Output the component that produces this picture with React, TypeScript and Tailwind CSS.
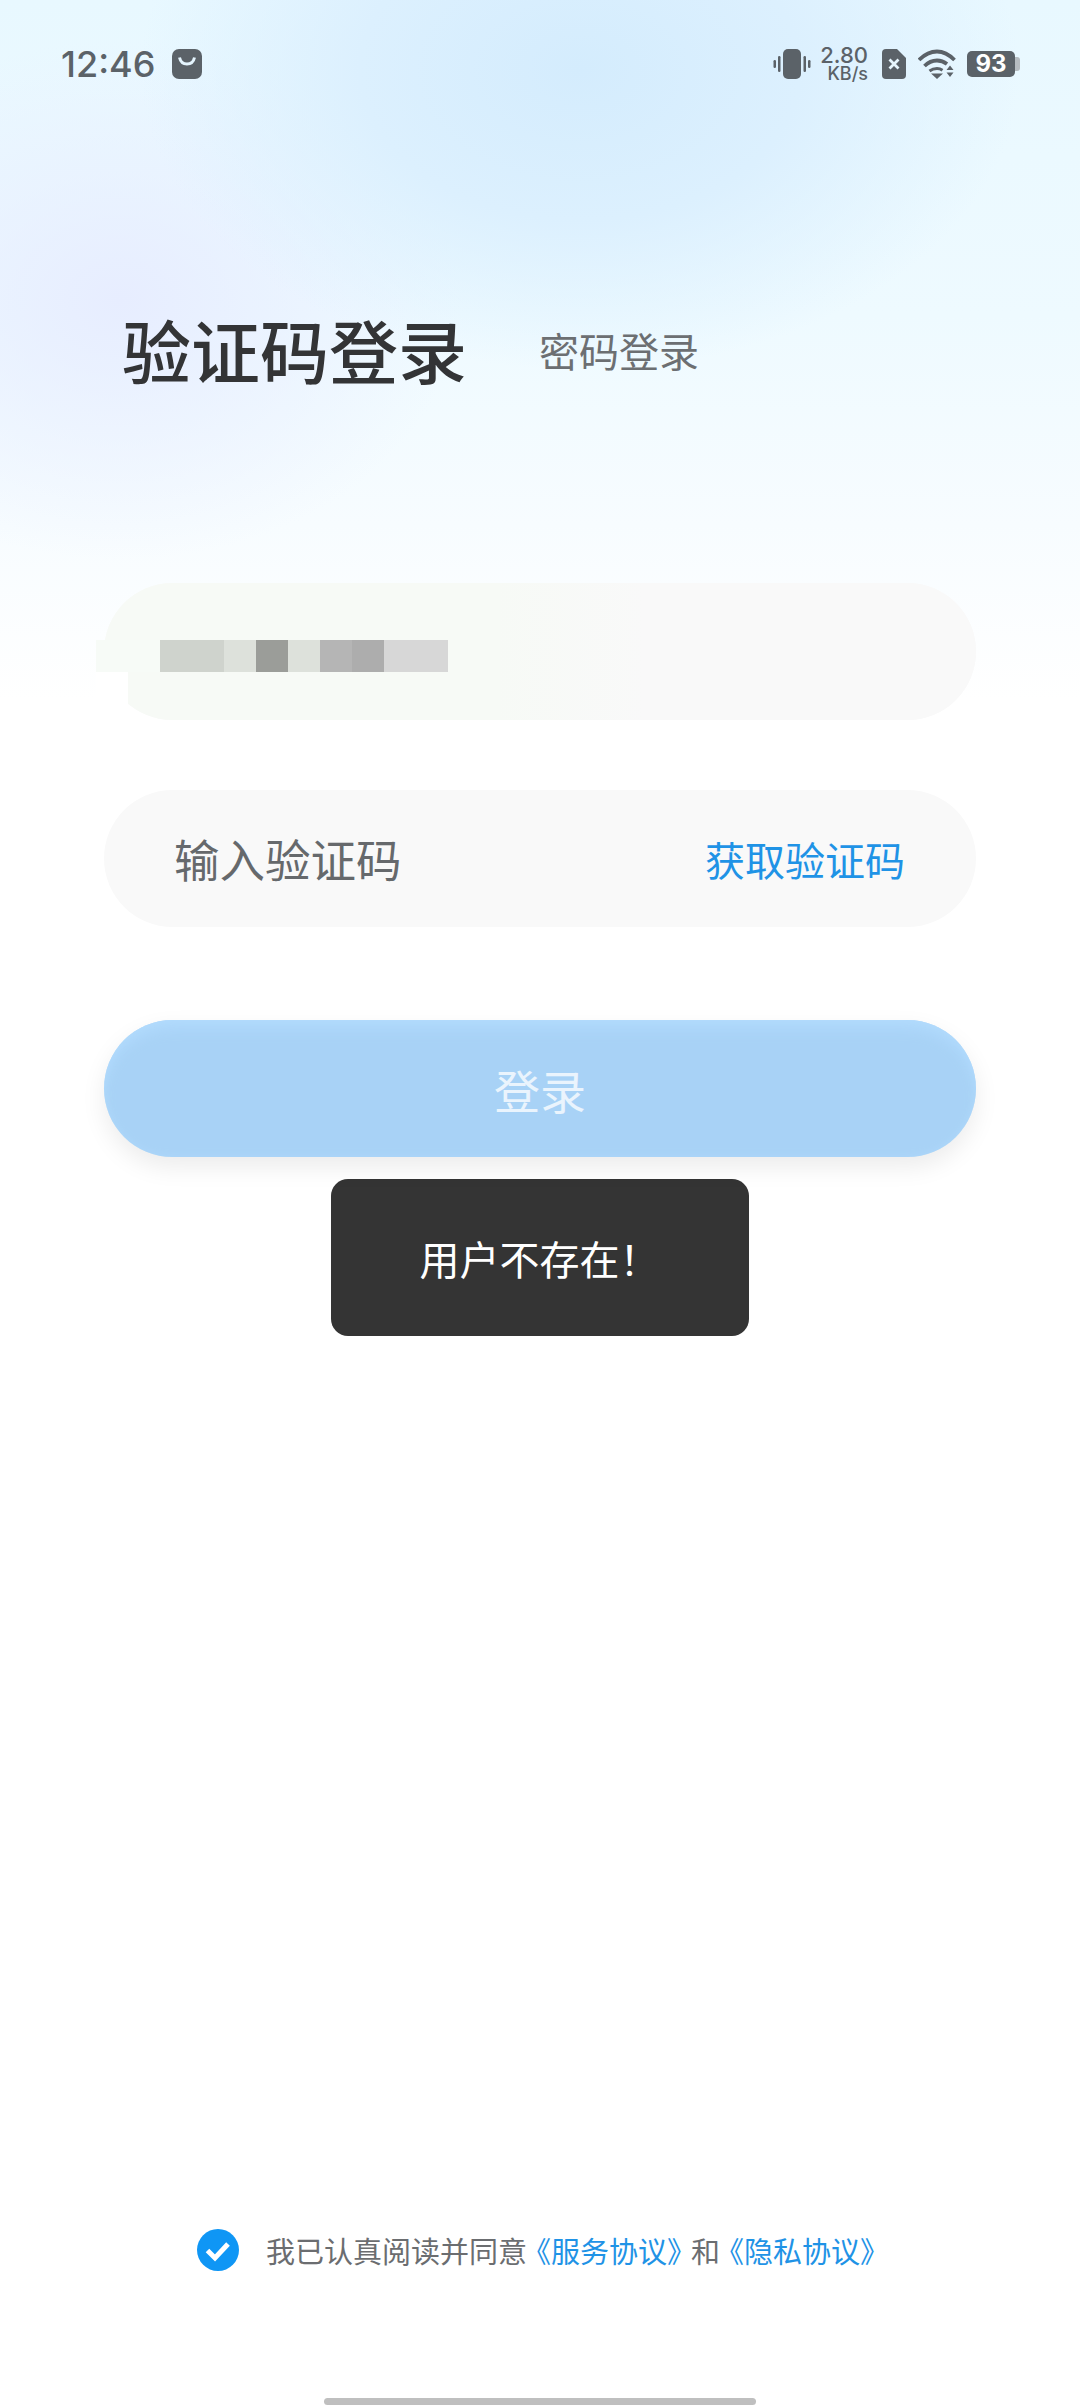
const cjk = "font-['Noto_Sans_CJK_SC','Noto_Sans',sans-serif]";

const blocks = [
  "w-[64px] bg-[#cfd3cd]",
  "w-[32px] bg-[#dde1db]",
  "w-[32px] bg-[#9b9d99]",
  "w-[32px] bg-[#dde1db]",
  "w-[32px] bg-[#b5b5b5]",
  "w-[32px] bg-[#adadad]",
  "w-[64px] bg-[#d7d7d7]",
];

function StatusBar() {
  return (
    <div className="flex h-[62px] items-center justify-between pl-[61px] pr-[60px] text-[#5b6268]">
      <div className="flex items-center gap-[17px]">
        <span className="font-['Inter',sans-serif] text-[36px] font-medium leading-none">12:46</span>
        <svg width="30" height="30" viewBox="0 0 30 30">
          <rect width="30" height="30" rx="7" fill="#5b6268" />
          <path d="M7.500 8.500c1 4.500 4 6.500 7.500 6.500s6.500-2 7.500-6.500" fill="none" stroke="#e4f4fd" strokeWidth="3" />
        </svg>
      </div>
      <div className="flex items-center">
        <svg width="38" height="30" viewBox="0 0 38 30" className="mr-[11px]">
          <rect x="10" y="0" width="18" height="30" rx="5" fill="#5b6268" />
          <rect x="5" y="7" width="2.500" height="16" rx="1.200" fill="#5b6268" />
          <rect x="0.500" y="11" width="2.500" height="8" rx="1.200" fill="#5b6268" />
          <rect x="30.500" y="7" width="2.500" height="16" rx="1.200" fill="#5b6268" />
          <rect x="35" y="11" width="2.500" height="8" rx="1.200" fill="#5b6268" />
        </svg>
        <div className="mr-[14px] flex w-[46px] flex-col items-end font-['Inter',sans-serif] font-medium">
          <span className="text-[22px] leading-[19px]">2.80</span>
          <span className="text-[18px] leading-[17px]">KB/s</span>
        </div>
        <svg width="24" height="30" viewBox="0 0 24 30" className="mr-[12px]">
          <path d="M4 0h11l9 9v17a4 4 0 0 1-4 4H4a4 4 0 0 1-4-4V4a4 4 0 0 1 4-4z" fill="#5b6268" />
          <path d="M7.500 10.500l9 9M16.500 10.500l-9 9" stroke="#e8f7fe" strokeWidth="2.800" />
        </svg>
        <svg width="38" height="30" viewBox="0 0 38 30" className="mr-[11px]">
          <path d="M1 11c5.500-5.500 12-8.500 18-8.500S31 5.500 36.500 11" fill="none" stroke="#5b6268" strokeWidth="3.800" />
          <path d="M6.500 17c3.500-3.500 8-5.500 12.500-5.500 3.500 0 7 1.200 10 3.500" fill="none" stroke="#5b6268" strokeWidth="3.800" />
          <path d="M13 24.500h12l-6 5.500z" fill="#5b6268" />
          <path d="M11.500 22c2-1.500 4.800-2.500 7.500-2.500s4 .7 5.500 1.700" fill="none" stroke="#5b6268" strokeWidth="3" />
          <path d="M28.500 21l3.500-4.500 3.500 4.500zM28.500 23.500h7l-3.500 4.500z" fill="#5b6268" />
        </svg>
        <div className="flex items-center">
          <div className="flex h-[26px] w-[48px] items-center justify-center rounded-[5px] bg-[#5b6268] font-['Inter',sans-serif] text-[24px] font-bold leading-none text-white">
            93
          </div>
          <div className="h-[14px] w-[5px] rounded-r-[3px] bg-[#b6bcc0]" />
        </div>
      </div>
    </div>
  );
}

export default function App() {
  return (
    <div className={`${cjk} relative h-[2408px] w-[1080px] overflow-hidden bg-white`}>
      <div className="absolute inset-x-0 top-0 h-[700px] bg-[radial-gradient(ellipse_440px_300px_at_580px_70px,#d4ecfd_0%,#dcf0fe_50%,rgba(232,247,255,0)_100%),radial-gradient(ellipse_340px_260px_at_120px_300px,#e7edff_0%,rgba(236,242,255,0)_100%),linear-gradient(180deg,#e8f8ff_0%,#eefaff_45%,#f7fcff_75%,#ffffff_100%)]" />

      <div className="relative">
        <div className="pt-[33px]">
          <StatusBar />
        </div>

        <div className="mt-[220px] flex items-center pl-[122px]">
          <h1 className="text-[69px] font-medium leading-none text-[#333436]">验证码登录</h1>
          <span className="ml-[72px] text-[40px] leading-none text-[#6c6f72]">密码登录</span>
        </div>

        <div className="mx-[104px] mt-[199px] flex flex-col">
          <div className="relative flex h-[137px] items-center rounded-full bg-[#f9f9f9] pl-[56px] pt-[8px]">
            <div className="absolute inset-0 rounded-full bg-[linear-gradient(90deg,#f7faf6_0%,#f7faf6_45%,#f9f9f9_62%)]" />
            <div className="absolute left-[-8px] top-[57px] h-[32px] w-[64px] bg-[#f7fbf7]" />
            <div className="absolute left-[-8px] top-[89px] h-[32px] w-[32px] bg-white" />
            <div className="relative flex h-[32px]">
              {blocks.map((b, i) => (
                <div key={i} className={b} />
              ))}
            </div>
          </div>

          <div className="mt-[70px] flex h-[137px] items-center justify-between rounded-full bg-[#f9f9f9] pl-[70px] pr-[71px]">
            <span className="text-[45.5px] leading-none text-[#66696c]">输入验证码</span>
            <span className="text-[40px] leading-none text-[#1f93e6]">获取验证码</span>
          </div>

          <button className="mt-[93px] flex h-[137px] items-center justify-center rounded-full bg-[#a8d2f6] text-[46px] leading-none text-[#eaf4fd] shadow-[inset_0_12px_18px_-6px_#b3dcfe,inset_0_0_14px_-4px_#b3dcfe,0_10px_24px_rgba(0,0,0,0.08)]">
            登录
          </button>
        </div>

        <div className="mx-auto mt-[22px] flex h-[157px] w-[418px] items-center justify-center rounded-[17px] bg-[#343434] pr-[1px] text-[40px] leading-none text-white">
          用户不存在！
        </div>
      </div>

      <div className="absolute inset-x-0 bottom-[137px] flex items-center pl-[197px]">
        <svg width="42" height="42" viewBox="0 0 42 42">
          <circle cx="21" cy="21" r="21" fill="#0f96f5" />
          <path d="M10.500 21.500l7.500 7.500 13-14" fill="none" stroke="#fff" strokeWidth="5" />
        </svg>
        <p className="ml-[27px] whitespace-nowrap text-[29px] leading-none text-[#6b6d70]">
          我已认真阅读并同意<span className="mx-[9.5px] text-[#1f93e6] [font-feature-settings:'halt']">《服务协议》</span>和<span className="mx-[9.5px] text-[#1f93e6] [font-feature-settings:'halt']">《隐私协议》</span>
        </p>
      </div>

      <div className="absolute bottom-[3px] left-[324px] h-[7px] w-[432px] rounded-full bg-[#bfbfbf]" />
    </div>
  );
}
